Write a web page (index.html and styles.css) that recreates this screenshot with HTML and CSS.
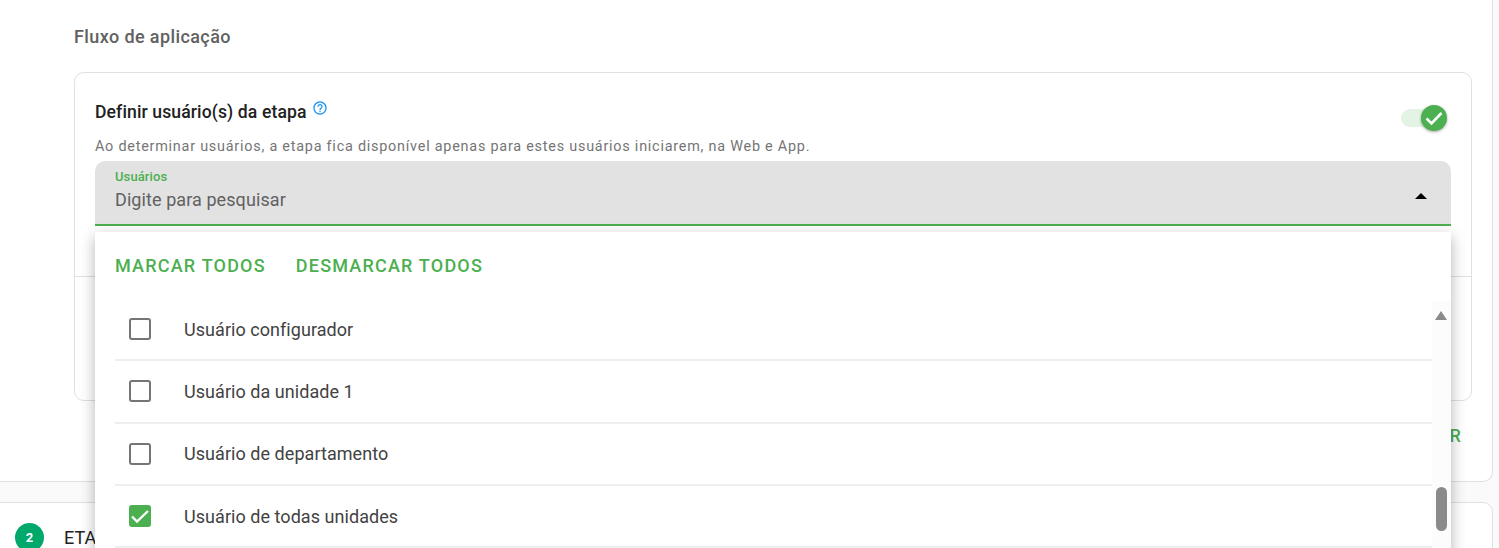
FILE: index.html
```html
<!DOCTYPE html>
<html lang="pt-BR">
<head>
    <meta charset="UTF-8">
    <title>Fluxo de aplicação</title>
    <link rel="stylesheet" href="styles.css">
</head>
<body>
    <section class="stepCard">
        <h2 class="sectionTitle">Fluxo de aplicação</h2>
        <div class="flowCard">
            <div class="flowTop">
                <div class="flowHead">
                    <h3 class="flowTitle">Definir usuário(s) da etapa</h3>
                    <svg class="helpIcon" viewBox="0 0 24 24" width="16" height="16" fill="#2196f3">
                        <path d="M11 18h2v-2h-2v2zm1-16C6.48 2 2 6.48 2 12s4.48 10 10 10 10-4.48 10-10S17.52 2 12 2zm0 18c-4.41 0-8-3.59-8-8s3.59-8 8-8 8 3.59 8 8-3.59 8-8 8zm0-14c-2.21 0-4 1.79-4 4h2c0-1.1.9-2 2-2s2 .9 2 2c0 2-3 1.75-3 5h2c0-2.25 3-2.5 3-5 0-2.21-1.79-4-4-4z"/>
                    </svg>
                </div>
                <div class="toggle">
                    <span class="toggleTrack"></span>
                    <span class="toggleThumb">
                        <svg viewBox="0 0 24 24" width="24" height="24" fill="none" stroke="#fff" stroke-width="2.6">
                            <path d="M4.5 12.5l5 5L19.5 7"/>
                        </svg>
                    </span>
                </div>
            </div>
            <p class="flowHint">Ao determinar usuários, a etapa fica disponível apenas para estes usuários iniciarem, na Web e App.</p>
            <div class="selectWrap">
                <div class="selectField">
                    <div class="selectText">
                        <label class="selectLabel">Usuários</label>
                        <span class="selectPlaceholder">Digite para pesquisar</span>
                    </div>
                    <span class="caretUp"></span>
                </div>
                <div class="menu">
                    <div class="menuActions">
                        <button class="menuBtn">MARCAR TODOS</button>
                        <button class="menuBtn">DESMARCAR TODOS</button>
                    </div>
                    <div class="menuBody">
                        <ul class="menuList">
                            <li class="menuItem"><span class="box"></span>Usuário configurador</li>
                            <li class="menuItem"><span class="box"></span>Usuário da unidade 1</li>
                            <li class="menuItem"><span class="box"></span>Usuário de departamento</li>
                            <li class="menuItem">
                                <span class="box checked">
                                    <svg viewBox="0 0 22 22" width="22" height="22" fill="none" stroke="#fff" stroke-width="2.4">
                                        <path d="M3 11.5l5 5L19 6"/>
                                    </svg>
                                </span>Usuário de todas unidades
                            </li>
                        </ul>
                        <div class="scrollTrack">
                            <span class="scrollArrow"></span>
                            <span class="scrollThumb"></span>
                        </div>
                    </div>
                </div>
            </div>
            <div class="flowDivider"></div>
        </div>
        <div class="cardFooter">
            <button class="saveBtn">SALVAR</button>
        </div>
    </section>
    <section class="nextCard">
        <span class="stepNum">2</span>
        <span class="stepName">ETAPA 2</span>
    </section>
</body>
</html>
```

FILE: styles.css
```css
* {
    margin: 0;
    padding: 0;
    box-sizing: border-box;
}
html, body {
    height: 548px;
    overflow: hidden;
}
body {
    background-color: #fafafa;
    font-family: Roboto, "Liberation Sans", sans-serif;
    color: #212121;
}
button {
    border: 0;
    background: none;
    font-family: inherit;
    cursor: pointer;
}
.stepCard {
    width: 1504px;
    height: 482px;
    margin-left: -11px;
    padding: 27px 20px 0 84px;
    background-color: #fff;
    border: 1px solid #e0e0e0;
    border-top: 0;
    border-radius: 0 0 10px 10px;
}
.sectionTitle {
    font-size: 18px;
    line-height: 20px;
    font-weight: 500;
    letter-spacing: 0.4px;
    color: #616161;
}
.flowCard {
    width: 1398px;
    height: 329px;
    margin-top: 25px;
    padding: 0 20px;
    border: 1px solid #e0e0e0;
    border-radius: 10px;
}
.flowTop {
    display: flex;
    justify-content: space-between;
    height: 54px;
    padding-top: 27px;
}
.flowHead {
    display: flex;
    align-items: flex-start;
    gap: 5px;
}
.flowTitle {
    font-size: 17.6px;
    line-height: 24px;
    font-weight: 500;
    letter-spacing: 0.1px;
    color: #212121;
}
.toggle {
    position: relative;
    width: 46px;
    height: 26px;
    margin: 4px 4px 0 0;
}
.toggleTrack {
    position: absolute;
    left: 0;
    top: 5px;
    width: 40px;
    height: 18px;
    border-radius: 9px;
    background-color: #e3f4e4;
}
.toggleThumb {
    position: absolute;
    left: 20px;
    top: 1px;
    width: 26px;
    height: 26px;
    display: flex;
    align-items: center;
    justify-content: center;
    border-radius: 50%;
    background-color: #4caf50;
    box-shadow: 0 1px 3px rgba(0, 0, 0, 0.35);
}
.flowHint {
    margin-top: 10px;
    font-size: 14.4px;
    line-height: 20px;
    letter-spacing: 0.77px;
    color: #757575;
}
.selectWrap {
    position: relative;
    margin-top: 4px;
}
.selectField {
    display: flex;
    justify-content: space-between;
    height: 65px;
    padding: 9px 24px 0 20px;
    background-color: #e2e2e2;
    border-bottom: 2px solid #4caf50;
    border-radius: 10px 10px 0 0;
}
.selectText {
    display: flex;
    flex-direction: column;
    gap: 5px;
}
.selectLabel {
    font-size: 13px;
    line-height: 14px;
    font-weight: 500;
    letter-spacing: 0.1px;
    color: #4caf50;
}
.selectPlaceholder {
    font-size: 18px;
    line-height: 22px;
    letter-spacing: 0.08px;
    color: #616161;
}
.caretUp {
    width: 0;
    height: 0;
    margin-top: 23px;
    border-left: 6px solid transparent;
    border-right: 6px solid transparent;
    border-bottom: 6px solid #000;
}
.menu {
    position: absolute;
    left: 0;
    right: 0;
    top: 71px;
    z-index: 5;
    height: 330px;
    background-color: #fff;
    box-shadow: 0 5px 14px rgba(0, 0, 0, 0.3);
}
.menuActions {
    display: flex;
    gap: 30px;
    padding: 24px 20px 0;
}
.menuBtn {
    font-size: 18px;
    line-height: 20px;
    font-weight: 500;
    letter-spacing: 1.2px;
    color: #4caf50;
}
.menuBody {
    display: flex;
    margin-top: 23px;
    padding-left: 20px;
}
.menuList {
    flex: 1;
    list-style: none;
}
.menuItem {
    display: flex;
    align-items: center;
    height: 62.3px;
    padding-left: 14px;
    border-bottom: 2px solid #eee;
    font-size: 18px;
    letter-spacing: 0.05px;
    color: #424242;
}
.box {
    width: 22px;
    height: 22px;
    margin-right: 33px;
    border: 2px solid #757575;
    border-radius: 3px;
}
.box.checked {
    border: 0;
    background-color: #4caf50;
}
.box svg {
    display: block;
}
.scrollTrack {
    position: relative;
    width: 19px;
    height: 260px;
    margin-top: 2px;
    background-color: #fcfcfc;
}
.scrollArrow {
    position: absolute;
    left: 3px;
    top: 10px;
    border-left: 6.5px solid transparent;
    border-right: 6.5px solid transparent;
    border-bottom: 9px solid #8a8a8a;
}
.scrollThumb {
    position: absolute;
    left: 4px;
    top: 186px;
    width: 11px;
    height: 44px;
    border-radius: 6px;
    background-color: #8a8a8a;
}
.flowDivider {
    height: 1px;
    margin: 50px -20px 0;
    background-color: #e0e0e0;
}
.cardFooter {
    display: flex;
    justify-content: flex-end;
    width: 1388px;
    margin-top: 25px;
}
.saveBtn {
    font-size: 18px;
    line-height: 20px;
    font-weight: 500;
    letter-spacing: 1.2px;
    color: #4caf50;
}
.nextCard {
    display: flex;
    align-items: center;
    gap: 20px;
    width: 1504px;
    height: 80px;
    margin: 20px 0 0 -11px;
    padding: 0 0 10px 25px;
    background-color: #fff;
    border: 1px solid #e0e0e0;
    border-radius: 10px;
}
.stepNum {
    display: flex;
    align-items: center;
    justify-content: center;
    width: 29px;
    height: 29px;
    border-radius: 50%;
    background-color: #00a86b;
    color: #fff;
    font-size: 13px;
    font-weight: 700;
}
.stepName {
    font-size: 18px;
    font-weight: 400;
    color: #212121;
}
```
